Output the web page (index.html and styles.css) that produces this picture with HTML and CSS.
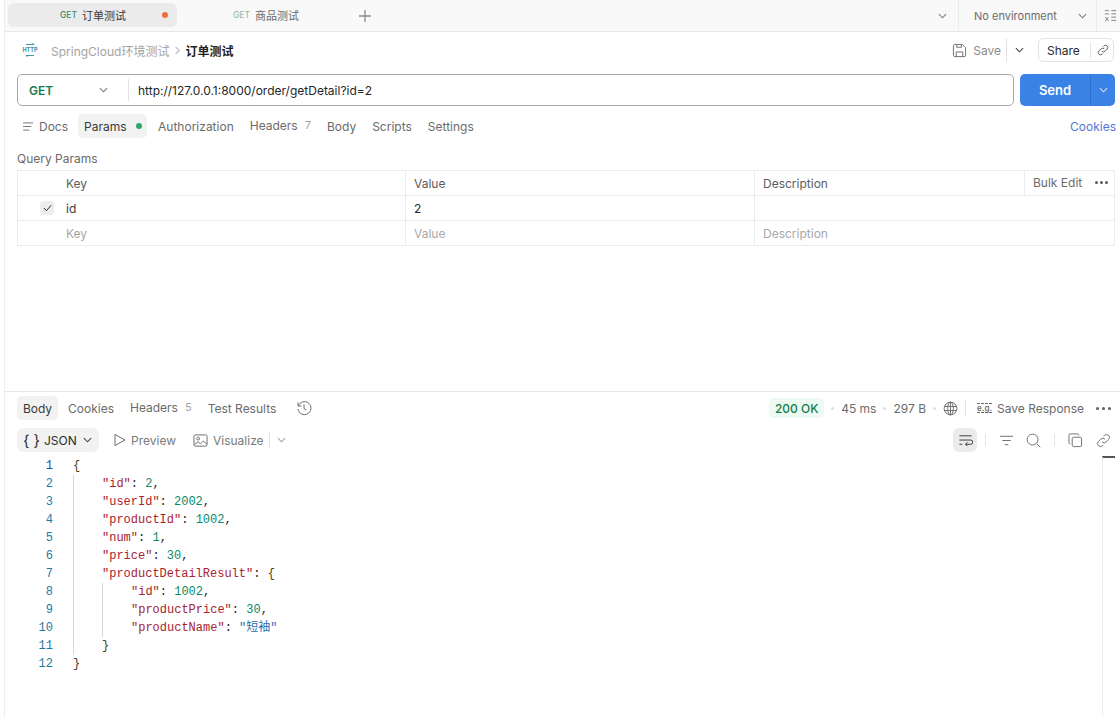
FILE: index.html
```html
<!DOCTYPE html>
<html lang="zh">
<head>
    <meta charset="UTF-8">
    <meta name="viewport" content="width=device-width, initial-scale=1.0">
    <title>订单测试</title>
    <link rel="stylesheet" href="styles.css">
</head>
<body>
<div class="app">
    <!-- Tab strip -->
    <div class="tabbar">
        <div class="tab active"><span class="tab-method">GET</span><span>订单测试</span><i class="unsaved-dot"></i></div>
        <div class="tab second"><span class="tab-method faded">GET</span><span>商品测试</span></div>
        <svg class="tab-add" viewBox="0 0 12 12"><path d="M6 0v12M0 6h12"/></svg>
        <svg class="chev tab-chev" viewBox="0 0 10 6"><path d="M1 1l4 4 4-4"/></svg>
        <div class="env"><span>No environment</span><svg class="chev" viewBox="0 0 10 6"><path d="M1 1l4 4 4-4"/></svg></div>
        <svg class="ico env-vars" viewBox="0 0 16 16"><path d="M1 2h5M9 2h6M1 6h5M9 6h6M9 10h6M9 14h6M1.500 10l4 5M5.500 10l-4 5"/></svg>
    </div>

    <!-- Breadcrumb row -->
    <div class="crumbs">
        <svg class="http-ico" viewBox="0 0 16 16"><path d="M4 2.500h8l-1.500-1.500M12 13.500h-8l1.500 1.500"/><text x="8" y="10" text-anchor="middle">HTTP</text></svg>
        <span class="crumb-parent">SpringCloud环境测试</span>
        <svg class="crumb-sep" viewBox="0 0 6 10"><path d="M1 1l4 4-4 4"/></svg>
        <span class="crumb-current">订单测试</span>
        <div class="crumb-actions">
            <svg class="ico" viewBox="0 0 16 16"><path d="M3 1.500h8l3.500 3.500v8a1.500 1.500 0 0 1-1.500 1.500h-10a1.500 1.500 0 0 1-1.500-1.500v-10a1.500 1.500 0 0 1 1.500-1.500zM5 1.500v3h5v-3M4.500 14.500v-5h7v5"/></svg>
            <span class="save-label">Save</span>
            <i class="vline save-line"></i>
            <svg class="chev save-chev" viewBox="0 0 10 6"><path d="M1 1l4 4 4-4"/></svg>
            <div class="share"><span>Share</span><i class="vline"></i>
                <svg class="ico" viewBox="0 0 16 16"><path d="M6.500 9.500a3 3 0 0 0 4.300 0l2.700-2.700a3 3 0 0 0-4.300-4.300l-1 1M9.500 6.500a3 3 0 0 0-4.300 0l-2.700 2.700a3 3 0 0 0 4.300 4.300l1-1"/></svg>
            </div>
        </div>
    </div>

    <!-- URL bar -->
    <div class="urlrow">
        <div class="urlbox">
            <div class="method"><span>GET</span><svg class="chev" viewBox="0 0 10 6"><path d="M1 1l4 4 4-4"/></svg></div>
            <div class="url">http://127.0.0.1:8000/order/getDetail?id=2</div>
        </div>
        <div class="send"><span class="send-label">Send</span><span class="send-more"><svg class="chev" viewBox="0 0 10 6"><path d="M1 1l4 4 4-4"/></svg></span></div>
    </div>

    <!-- Request tabs -->
    <div class="reqtabs">
        <span class="rt docs"><svg class="ico docs-ico" viewBox="0 0 12 10"><path d="M0 1h11M0 5h9M0 9h7"/></svg>Docs</span>
        <span class="rt pill">Params<i class="green-dot"></i></span>
        <span class="rt">Authorization</span>
        <span class="rt raised">Headers<em>7</em></span>
        <span class="rt">Body</span>
        <span class="rt">Scripts</span>
        <span class="rt">Settings</span>
        <span class="cookies-link">Cookies</span>
    </div>

    <!-- Params -->
    <div class="params">
        <div class="params-title">Query Params</div>
        <table class="grid">
            <colgroup><col class="c-key"><col class="c-val"><col class="c-desc"><col></colgroup>
            <tr class="head">
                <td>Key</td><td>Value</td><td>Description</td>
                <td class="bulk"><span>Bulk Edit</span><b class="dots"><i></i><i></i><i></i></b></td>
            </tr>
            <tr>
                <td><span class="check"><svg viewBox="0 0 10 8"><path d="M1 4l2.800 3L9 1"/></svg></span>id</td>
                <td class="dark">2</td><td colspan="2"></td>
            </tr>
            <tr class="ghost"><td>Key</td><td>Value</td><td colspan="2">Description</td></tr>
        </table>
    </div>

    <!-- Response -->
    <div class="response">
        <div class="restabs">
            <span class="rs pill">Body</span>
            <span class="rs">Cookies</span>
            <span class="rs raised">Headers<em>5</em></span>
            <span class="rs">Test Results</span>
            <svg class="ico history" viewBox="0 0 16 16"><path d="M2 2.500v3.500h3.500M2.300 6a6.500 6.500 0 1 1-.3 3M8 4.500v4l2.500 1.500"/></svg>
            <div class="res-meta">
                <span class="status">200 OK</span><i class="sep-dot"></i>
                <span>45 ms</span><i class="sep-dot"></i>
                <span>297 B</span><i class="sep-dot"></i>
                <svg class="ico" viewBox="0 0 16 16"><circle cx="8" cy="8" r="6.800"/><ellipse cx="8" cy="8" rx="3" ry="6.800"/><path d="M1.500 5.800h13M1.500 10.200h13M8 1.200v13.600"/></svg>
                <i class="vline meta-line"></i>
                <span class="eg">e.g.</span>
                <span class="save-res">Save Response</span>
                <b class="dots res-dots"><i></i><i></i><i></i></b>
            </div>
        </div>

        <div class="toolbar">
            <span class="json-pill"><span class="braces">{ }</span>JSON<svg class="chev" viewBox="0 0 10 6"><path d="M1 1l4 4 4-4"/></svg></span>
            <svg class="ico preview-ico" viewBox="0 0 14 14"><path d="M2 1.500l10 5.500-10 5.500z"/></svg>
            <span class="tool-label">Preview</span>
            <svg class="ico vis-ico" viewBox="0 0 16 16"><rect x="1" y="2" width="14" height="12" rx="1.500"/><circle cx="5.500" cy="6" r="1.500"/><path d="M1.500 12.500l4-3 2.500 2 3-3 4 3.500"/></svg>
            <span class="tool-label">Visualize</span>
            <i class="vline vis-line"></i>
            <svg class="chev vis-chev" viewBox="0 0 10 6"><path d="M1 1l4 4 4-4"/></svg>
            <div class="tool-right">
                <span class="wrap-btn"><svg class="ico" viewBox="0 0 16 16"><path d="M1.500 3h13M1.500 7.500h12a1.800 1.800 0 0 1 0 4.500H8M10 10l-2 2 2 2M1.500 12h3"/></svg></span>
                <i class="vline tl-a"></i>
                <svg class="ico tl-filter" viewBox="0 0 16 16"><path d="M1 3.500h14M3.500 8h9M6 12.500h4"/></svg>
                <svg class="ico tl-search" viewBox="0 0 16 16"><circle cx="7" cy="7" r="5.800"/><path d="M11.200 11.200l4 4"/></svg>
                <i class="vline tl-b"></i>
                <svg class="ico tl-copy" viewBox="0 0 16 16"><rect x="4.500" y="4.500" width="10" height="10" rx="1.500"/><path d="M11.500 2.500v-.2a1.300 1.300 0 0 0-1.300-1.300h-7.900a1.300 1.300 0 0 0-1.300 1.300v7.900a1.300 1.300 0 0 0 1.300 1.300h.2"/></svg>
                <svg class="ico tl-link" viewBox="0 0 16 16"><path d="M6.500 9.500a3 3 0 0 0 4.300 0l2.700-2.700a3 3 0 0 0-4.300-4.300l-1 1M9.500 6.500a3 3 0 0 0-4.300 0l-2.700 2.700a3 3 0 0 0 4.300 4.300l1-1"/></svg>
            </div>
        </div>

        <div class="code">
            <div class="gutter">
                <div class="cur">1</div><div>2</div><div>3</div><div>4</div><div>5</div><div>6</div>
                <div>7</div><div>8</div><div>9</div><div>10</div><div>11</div><div>12</div>
            </div>
            <div class="lines">
                <div><b>{</b></div>
                <div class="block">
                    <div><s>"id"</s>: <u>2</u>,</div>
                    <div><s>"userId"</s>: <u>2002</u>,</div>
                    <div><s>"productId"</s>: <u>1002</u>,</div>
                    <div><s>"num"</s>: <u>1</u>,</div>
                    <div><s>"price"</s>: <u>30</u>,</div>
                    <div><s>"productDetailResult"</s>: <b>{</b></div>
                    <div class="block">
                        <div><s>"id"</s>: <u>1002</u>,</div>
                        <div><s>"productPrice"</s>: <u>30</u>,</div>
                        <div><s>"productName"</s>: <q>"短袖"</q></div>
                    </div>
                    <div><b>}</b></div>
                </div>
                <div><b>}</b></div>
            </div>
            <div class="scrollmark"></div>
        </div>
    </div>
</div>
</body>
</html>
```

FILE: styles.css
```css
* {
    box-sizing: border-box;
}

html, body {
    margin: 0;
    height: 100%;
    overflow: hidden;
}

body {
    background: #ffffff;
    color: #6b6b6b;
    font-family: Inter, "Noto Sans CJK SC", sans-serif;
    font-size: 12px;
}

i, em {
    font-style: normal;
}

.app {
    width: 1116px;
    height: 717px;
    margin-left: 4px;
    border-left: 1px solid #ededed;
    display: flex;
    flex-direction: column;
    position: relative;
}

.app > * {
    flex: none;
}

.ico {
    width: 15px;
    height: 15px;
    flex: none;
    fill: none;
    stroke: #6b6b6b;
    stroke-width: 1;
}

.chev {
    width: 9px;
    height: 6px;
    flex: none;
    fill: none;
    stroke: #7a7a7a;
    stroke-width: 1.200;
}

.vline {
    display: block;
    width: 1px;
    background: #e3e3e3;
    flex: none;
}

/* tab strip */
.tabbar {
    height: 32px;
    background: #f9f9f9;
    border-bottom: 1px solid #e8e8e8;
    display: flex;
    align-items: center;
    padding-left: 3px;
}

.tab {
    width: 169px;
    height: 24px;
    margin-top: -1px;
    border-radius: 6px;
    display: flex;
    align-items: center;
    padding-left: 52px;
    font-size: 11px;
    color: #6b6b6b;
    position: relative;
}

.tab.second {
    padding-left: 56px;
}

.tab.active {
    background: #ebebeb;
    color: #3a3a3a;
}

.tab-method {
    font-size: 8.500px;
    font-weight: 500;
    color: #3f8d69;
    margin-right: 5px;
}

.tab-method.faded {
    color: #94bda9;
}

.unsaved-dot {
    position: absolute;
    right: 9px;
    top: 9px;
    width: 6px;
    height: 6px;
    border-radius: 50%;
    background: #f26b3a;
}

.tab-add {
    width: 12px;
    height: 12px;
    margin-left: 13px;
    fill: none;
    stroke: #8a8a8a;
    stroke-width: 1.300;
}

.tab-chev {
    margin-left: 567px;
}

.env {
    width: 139px;
    height: 31px;
    margin-left: 11px;
    border-left: 1px solid #ececec;
    border-right: 1px solid #ececec;
    display: flex;
    align-items: center;
    padding-left: 15px;
    font-size: 11px;
    color: #6b6b6b;
}

.env .chev {
    margin-left: auto;
    margin-right: 9px;
}

.env-vars {
    width: 13px;
    height: 13px;
    margin-left: 7px;
}

/* breadcrumb */
.crumbs {
    height: 36px;
    display: flex;
    align-items: center;
    padding-left: 17px;
}

.http-ico {
    width: 16px;
    height: 16px;
    margin-right: 13px;
    fill: none;
    stroke: #2f8f9e;
    stroke-width: 0.900;
}

.http-ico text {
    font-size: 5.500px;
    font-weight: 700;
    fill: #2f8f9e;
    stroke: none;
}

.crumb-parent {
    color: #a3a3a3;
}

.crumb-sep {
    width: 5px;
    height: 9px;
    margin: 0 5px 0 6px;
    fill: none;
    stroke: #7a7a7a;
}

.crumb-current {
    color: #1f1f1f;
    font-weight: 600;
}

.crumb-actions {
    margin-left: auto;
    margin-right: 6px;
    display: flex;
    align-items: center;
}

.save-label {
    margin-left: 6px;
    color: #8a8a8a;
}

.save-line {
    height: 24px;
    margin-left: 5px;
}

.save-chev {
    margin-left: 8px;
    stroke: #444444;
}

.share {
    width: 76px;
    height: 24px;
    margin-left: 14px;
    border: 1px solid #e3e3e3;
    border-radius: 5px;
    display: flex;
    align-items: center;
    padding-left: 8px;
    color: #2b2b2b;
}

.share .vline {
    height: 16px;
    margin: 0 6px 0 10px;
}

.share .ico {
    width: 12px;
    height: 12px;
    stroke: #333333;
}

/* url bar */
.urlrow {
    height: 32px;
    margin-top: 6px;
    display: flex;
    padding-left: 12px;
}

.urlbox {
    width: 997px;
    border: 1px solid #a8a8a8;
    border-radius: 5px;
    display: flex;
    align-items: center;
}

.method {
    width: 111px;
    height: 22px;
    border-right: 1px solid #e3e3e3;
    display: flex;
    align-items: center;
    padding-left: 11px;
    font-weight: 600;
    color: #177a50;
}

.method .chev {
    margin-left: 46px;
}

.url {
    padding-left: 9px;
    color: #262626;
}

.send {
    width: 95px;
    margin-left: 6px;
    background: #3b82e6;
    border-radius: 5px;
    display: flex;
    align-items: center;
    color: #ffffff;
    font-size: 13px;
    font-weight: 600;
}

.send-label {
    width: 70px;
    text-align: center;
}

.send-more {
    flex: 1;
    align-self: stretch;
    border-left: 1px solid #2f6fcb;
    display: flex;
    align-items: center;
    justify-content: center;
}

.send-more .chev {
    stroke: #d5e5fb;
}

/* request tabs */
.reqtabs {
    height: 24px;
    margin-top: 8px;
    padding-left: 18px;
    display: flex;
    align-items: center;
}

.rt {
    margin-right: 16px;
    display: flex;
    align-items: center;
}

.rt.docs {
    margin-right: 10px;
}

.docs-ico {
    width: 11px;
    height: 9px;
    margin-right: 5px;
}

.rt.pill {
    height: 24px;
    width: 69px;
    padding-left: 6px;
    margin-right: 11px;
    background: #f2f2f2;
    border-radius: 5px;
    color: #3a3a3a;
}

.green-dot {
    width: 6px;
    height: 6px;
    margin-left: 9px;
    border-radius: 50%;
    background: #2fa866;
}

.raised {
    position: relative;
    top: -1px;
}

.raised em {
    margin-left: 7px;
    color: #a3a3a3;
    font-size: 11px;
}

.cookies-link {
    margin-left: auto;
    margin-right: 4px;
    color: #5478d6;
}

/* params */
.params {
    height: 254px;
    padding: 14px 0 0 12px;
    border-bottom: 1px solid #e8e8e8;
}

.params-title {
    line-height: 14px;
    margin-bottom: 4px;
}

.grid {
    width: 1098px;
    table-layout: fixed;
    border-collapse: collapse;
}

.c-key {
    width: 388px;
}

.c-val {
    width: 349px;
}

.c-desc {
    width: 270px;
}

.grid td {
    height: 25px;
    border: 1px solid #ebebeb;
    padding: 0 8px;
    white-space: nowrap;
}

.grid td:first-child {
    padding-left: 48px;
    position: relative;
    color: #3a3a3a;
}

.grid .head td {
    color: #5c5c5c;
}

.grid .dark {
    color: #262626;
}

.grid .ghost td,
.grid .ghost td:first-child {
    color: #a8a8a8;
}

.grid .head .bulk {
    color: #6b6b6b;
    padding-right: 6px;
}

.bulk span {
    position: relative;
    top: -1px;
}

.dots {
    display: inline-flex;
    gap: 3px;
    vertical-align: middle;
}

.dots i {
    width: 3px;
    height: 3px;
    border-radius: 50%;
    background: #5c5c5c;
}

.bulk .dots {
    float: right;
    gap: 2px;
    margin: 5px 0 0 0;
}

.check {
    position: absolute;
    left: 22px;
    top: 5px;
    width: 14px;
    height: 14px;
    border-radius: 4px;
    background: #ededed;
    display: flex;
    align-items: center;
    justify-content: center;
}

.check svg {
    width: 9px;
    height: 8px;
    fill: none;
    stroke: #262626;
    stroke-width: 1.100;
}

/* response */
.restabs {
    height: 24px;
    margin-top: 4px;
    padding-left: 12px;
    display: flex;
    align-items: center;
}

.rs {
    margin-right: 16px;
    display: flex;
    align-items: center;
}

.rs.pill {
    height: 24px;
    width: 41px;
    justify-content: center;
    margin-right: 10px;
    background: #f2f2f2;
    border-radius: 5px;
    color: #3a3a3a;
}

.history {
    margin-left: 4px;
    width: 16px;
    height: 16px;
}

.res-meta {
    margin-left: auto;
    margin-right: 9px;
    display: flex;
    align-items: center;
}

.status {
    width: 55px;
    height: 20px;
    border-radius: 5px;
    background: #ecfaf2;
    color: #177a50;
    font-weight: 500;
    display: flex;
    align-items: center;
    justify-content: center;
}

.sep-dot {
    width: 3px;
    height: 3px;
    margin: 0 7px;
    border-radius: 50%;
    background: #e0e0e0;
}

.meta-line {
    height: 14px;
    margin: 0 11px 0 7px;
}

.eg {
    width: 15px;
    border-top: 1px dashed #6b6b6b;
    border-bottom: 1px dashed #6b6b6b;
    font-size: 8px;
    line-height: 8px;
    font-weight: 600;
    text-align: center;
    margin-right: 5px;
}

.res-dots {
    margin-left: 12px;
}

.toolbar {
    height: 24px;
    margin-top: 8px;
    padding-left: 12px;
    display: flex;
    align-items: center;
}

.json-pill {
    width: 82px;
    height: 24px;
    background: #f2f2f2;
    border-radius: 6px;
    display: flex;
    align-items: center;
    padding-left: 6px;
    color: #2b2b2b;
}

.braces {
    font-size: 15px;
    margin-right: 4px;
}

.json-pill .chev {
    margin-left: 6px;
    stroke: #444444;
}

.preview-ico {
    width: 14px;
    height: 14px;
    margin-left: 14px;
    margin-right: 4px;
}

.tool-label {
    color: #7a7a7a;
}

.vis-ico {
    width: 15px;
    margin-left: 17px;
    margin-right: 5px;
}

.vis-line {
    height: 16px;
    margin-left: 5px;
}

.vis-chev {
    margin-left: 7px;
    stroke: #a3a3a3;
}

.tool-right {
    margin-left: auto;
    margin-right: 9px;
    display: flex;
    align-items: center;
}

.wrap-btn {
    width: 24px;
    height: 24px;
    border-radius: 6px;
    background: #ebebeb;
    display: flex;
    align-items: center;
    justify-content: center;
}

.wrap-btn .ico {
    stroke: #333333;
}

.tool-right .vline {
    height: 12px;
}

.tl-a {
    margin: 0 13px 0 8px;
}

.tl-search {
    margin-left: 12px;
}

.tl-b {
    margin: 0 13px;
}

.tl-link {
    margin-left: 13px;
}

/* code */
.code {
    margin-top: 5px;
    display: flex;
    position: relative;
    font-family: "Liberation Mono", "Noto Sans CJK SC", monospace;
    font-size: 12px;
    line-height: 18px;
    color: #1f1f1f;
}

.gutter {
    width: 48px;
    text-align: right;
    color: #1f7aa3;
}

.gutter .cur {
    color: #0f4fa8;
}

.lines {
    margin-left: 20px;
}

.lines b {
    font-weight: 400;
    color: #4a3a10;
}

.lines s {
    text-decoration: none;
    color: #a8232f;
}

.lines u {
    text-decoration: none;
    color: #0b8a6a;
}

.lines q {
    quotes: none;
    color: #1f6fb0;
}

.block {
    border-left: 1px solid #d9d9d9;
    padding-left: 28px;
}

.scrollmark {
    position: absolute;
    left: 1097px;
    top: -1px;
    width: 13px;
    height: 260px;
    border-left: 1px solid #ececec;
    border-top: 2px solid #555555;
}
```
